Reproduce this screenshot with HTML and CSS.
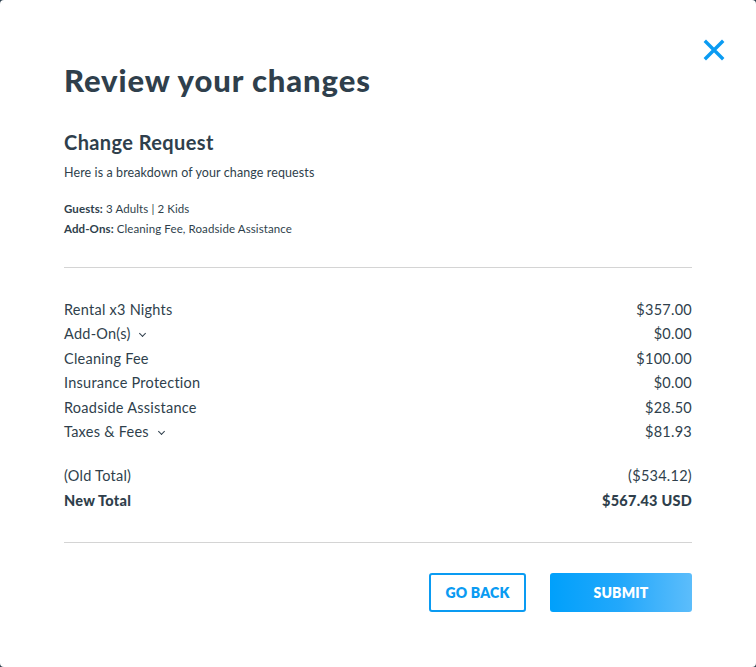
FILE: index.html
```html
<!DOCTYPE html>
<html lang="en">
<head>
    <meta charset="UTF-8">
    <meta name="viewport" content="width=device-width, initial-scale=1.0">
    <title>Review your changes</title>
    <link rel="stylesheet" href="styles.css">
</head>
<body>
    <div class="modal">
        <button class="close-btn" aria-label="Close">
            <svg width="22" height="22" viewBox="0 0 22 22"><path d="M3 3 L19 19 M19 3 L3 19" stroke="#0a9bf2" stroke-width="3.4" stroke-linecap="square" fill="none"/></svg>
        </button>

        <h1>Review your changes</h1>

        <div class="request">
            <h2>Change Request</h2>
            <p class="intro">Here is a breakdown of your change requests</p>
            <div class="meta"><strong>Guests:</strong> 3 Adults | 2 Kids</div>
            <div class="meta"><strong>Add-Ons:</strong> Cleaning Fee, Roadside Assistance</div>
        </div>

        <div class="breakdown">
            <div class="line"><span>Rental x3 Nights</span><span>$357.00</span></div>
            <div class="line"><span>Add-On(s) <i class="caret"></i></span><span>$0.00</span></div>
            <div class="line"><span>Cleaning Fee</span><span>$100.00</span></div>
            <div class="line"><span>Insurance Protection</span><span>$0.00</span></div>
            <div class="line"><span>Roadside Assistance</span><span>$28.50</span></div>
            <div class="line"><span>Taxes &amp; Fees <i class="caret"></i></span><span>$81.93</span></div>

            <div class="line old"><span>(Old Total)</span><span>($534.12)</span></div>
            <div class="line total"><span>New Total</span><span>$567.43 USD</span></div>
        </div>

        <div class="actions">
            <button class="btn btn-outline">GO BACK</button>
            <button class="btn btn-primary">SUBMIT</button>
        </div>
    </div>
</body>
</html>
```

FILE: styles.css
```css
html, body {
    margin: 0;
    height: 100%;
}
body {
    background-color: #2d3f4e;
    font-family: Lato, "Open Sans", sans-serif;
    color: #2f3f4c;
}
.modal {
    position: relative;
    box-sizing: border-box;
    height: 667px;
    background-color: #fff;
    border-radius: 4px;
    padding: 62px 64px 0 64px;
}
.close-btn {
    position: absolute;
    top: 39px;
    right: 31px;
    background: none;
    border: none;
    padding: 0;
    cursor: pointer;
}
.close-btn svg {
    display: block;
}
h1 {
    margin: 0;
    font-size: 31px;
    font-weight: 900;
    line-height: 36px;
    letter-spacing: 0.9px;
}
.request {
    margin-top: 32px;
    padding-bottom: 28px;
    border-bottom: 1px solid #d4d4d4;
}
h2 {
    margin: 0;
    font-size: 20px;
    font-weight: 700;
    line-height: 24px;
    letter-spacing: 0.4px;
}
.intro {
    margin: 11px 0 18px 0;
    font-size: 12.5px;
    line-height: 16px;
    letter-spacing: 0.1px;
}
.meta {
    font-size: 11.5px;
    line-height: 20px;
    letter-spacing: 0.1px;
}
.meta strong {
    font-weight: 700;
}
.breakdown {
    padding: 30px 0 29px 0;
    border-bottom: 1px solid #d4d4d4;
}
.line {
    display: flex;
    justify-content: space-between;
    align-items: center;
    font-size: 14.5px;
    line-height: 24.4px;
    letter-spacing: 0.25px;
}
.line.old {
    margin-top: 20px;
}
.line.total {
    font-weight: 900;
    line-height: 24px;
}
.caret {
    display: inline-block;
    width: 4px;
    height: 4px;
    margin: 0 0 3px 6px;
    border-right: 1.2px solid #2f3f4c;
    border-bottom: 1.2px solid #2f3f4c;
    transform: rotate(45deg);
}
.actions {
    display: flex;
    justify-content: flex-end;
    gap: 24px;
    margin-top: 30px;
}
.btn {
    height: 39px;
    border-radius: 3px;
    font-family: Lato, sans-serif;
    font-size: 14px;
    font-weight: 800;
    letter-spacing: 0.2px;
    cursor: pointer;
}
.btn-outline {
    width: 97px;
    background: #fff;
    border: 2px solid #0a9bf2;
    color: #0a9bf2;
}
.btn-primary {
    width: 142px;
    border: none;
    color: #fff;
    background: linear-gradient(90deg, #00a0fb 0%, #23a8fb 50%, #5cbdfb 100%);
}
```
